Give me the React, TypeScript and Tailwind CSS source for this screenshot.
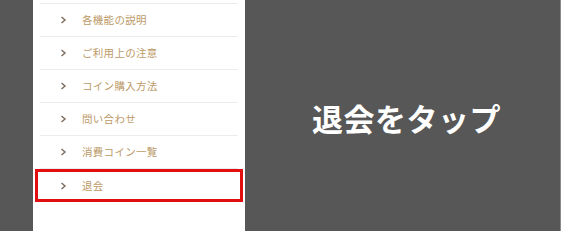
import React from 'react';

const items = ['各機能の説明', 'ご利用上の注意', 'コイン購入方法', '問い合わせ', '消費コイン一覧'];

function Chevron() {
  return (
    <svg width="7" height="8" viewBox="0 0 7 8" className="shrink-0">
      <path d="M1.5 1 L5 4 L1.5 7" fill="none" stroke="#7d6f61" strokeWidth="1.5" />
    </svg>
  );
}

function Row({ label, tall }: { label: string; tall?: boolean }) {
  return (
    <div className={`flex items-center pl-[20px] ${tall ? 'h-[33px]' : 'h-[32px]'}`}>
      <Chevron />
      <span className="ml-[15px] text-[10.5px] text-[#bc9a68] tracking-[0.3px]">{label}</span>
    </div>
  );
}

export default function App() {
  return (
    <div
      className="flex h-[231px] w-[580px] overflow-hidden"
      style={{ fontFamily: '"Noto Sans CJK JP", "Noto Sans", sans-serif' }}
    >
      <div className="w-[33px] bg-[#575757]" />
      <div className="w-[212px] bg-white pt-[3px]">
        <div className="mx-[7px] border-t border-[#ececec]">
          {items.map((label) => (
            <div key={label} className="border-b border-[#ececec]">
              <Row label={label} />
            </div>
          ))}
          {/* 退会 row highlighted */}
          <div className="relative">
            <Row label="退会" tall />
            <div className="absolute -left-[5px] -right-[5px] top-0 bottom-0 border-[3px] border-[#e10f10]" />
          </div>
        </div>
      </div>
      <div className="flex flex-1 items-center justify-center bg-[#575757] pt-[6px] pl-[8px]">
        <span className="text-[31px] font-bold text-white tracking-[0.5px]">退会をタップ</span>
      </div>
      <div className="w-[1px] bg-[#8a8a8a]" />
      <div className="w-[19px] bg-white" />
    </div>
  );
}
